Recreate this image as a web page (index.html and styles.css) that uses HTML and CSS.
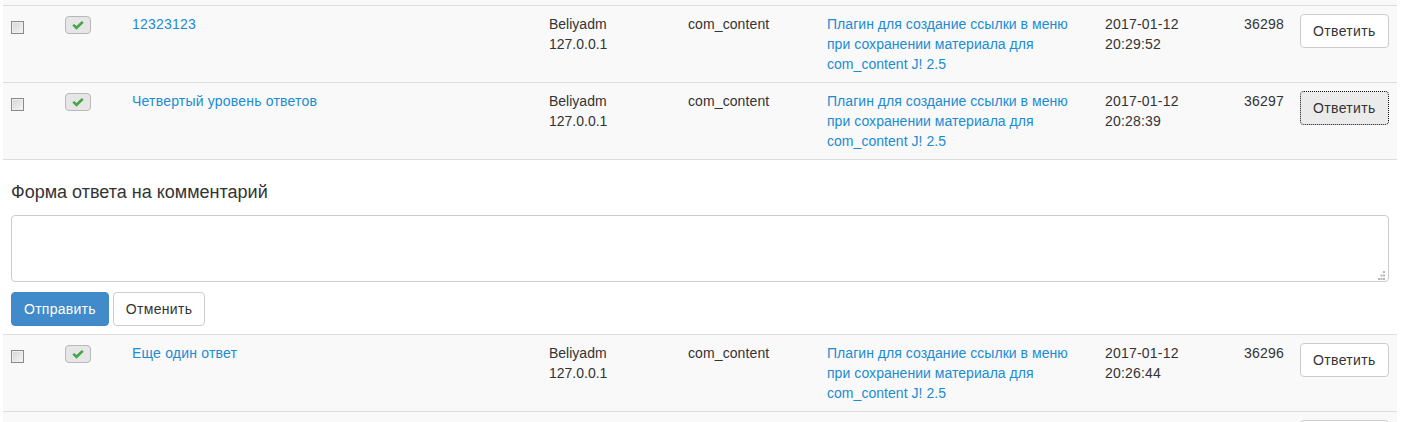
FILE: index.html
```html
<!DOCTYPE html>
<html lang="en">
<head>
    <meta charset="UTF-8">
    <meta name="viewport" content="width=device-width, initial-scale=1.0">
    <title>Комментарии</title>
    <link rel="stylesheet" href="styles.css">
</head>
<body>

<table class="comments">
    <colgroup>
        <col class="col-check">
        <col class="col-status">
        <col class="col-title">
        <col class="col-author">
        <col class="col-component">
        <col class="col-article">
        <col class="col-date">
        <col class="col-id">
        <col class="col-action">
    </colgroup>
    <tbody>
        <tr class="row-cut"><td colspan="9"></td></tr>

        <tr>
            <td><input type="checkbox" class="check"></td>
            <td><a class="status" href="#"><svg viewBox="0 0 12 9" class="status-icon"><path d="M0.3 4.6 L2.2 2.9 L4.5 5 L9.8 0 L11.7 1.8 L4.5 8.8 Z"/></svg></a></td>
            <td class="title"><a href="#">12323123</a></td>
            <td>Beliyadm<br>127.0.0.1</td>
            <td class="component">com_content</td>
            <td class="article"><a href="#">Плагин для создание ссылки в меню при сохранении материала для com_content J! 2.5</a></td>
            <td class="date">2017-01-12<br>20:29:52</td>
            <td class="date">36298</td>
            <td><button class="btn">Ответить</button></td>
        </tr>

        <tr>
            <td><input type="checkbox" class="check"></td>
            <td><a class="status" href="#"><svg viewBox="0 0 12 9" class="status-icon"><path d="M0.3 4.6 L2.2 2.9 L4.5 5 L9.8 0 L11.7 1.8 L4.5 8.8 Z"/></svg></a></td>
            <td class="title"><a href="#">Четвертый уровень ответов</a></td>
            <td>Beliyadm<br>127.0.0.1</td>
            <td class="component">com_content</td>
            <td class="article"><a href="#">Плагин для создание ссылки в меню при сохранении материала для com_content J! 2.5</a></td>
            <td class="date">2017-01-12<br>20:28:39</td>
            <td class="date">36297</td>
            <td><button class="btn btn-focus">Ответить</button></td>
        </tr>

        <tr class="row-form">
            <td colspan="9">
                <form class="reply">
                    <h4>Форма ответа на комментарий</h4>
                    <div class="reply-field">
                        <textarea class="reply-text"></textarea>
                        <svg class="grip" viewBox="0 0 8 9">
                            <path d="M6 0h2v2H6zM3.5 3.5h2v2h-2zM6 3.5h2v2H6zM1 7h2v2H1zM3.5 7h2v2h-2zM6 7h2v2H6z"/>
                        </svg>
                    </div>
                    <div class="reply-buttons">
                        <button type="button" class="btn btn-primary">Отправить</button>
                        <button type="button" class="btn">Отменить</button>
                    </div>
                </form>
            </td>
        </tr>

        <tr>
            <td><input type="checkbox" class="check"></td>
            <td><a class="status" href="#"><svg viewBox="0 0 12 9" class="status-icon"><path d="M0.3 4.6 L2.2 2.9 L4.5 5 L9.8 0 L11.7 1.8 L4.5 8.8 Z"/></svg></a></td>
            <td class="title"><a href="#">Еще один ответ</a></td>
            <td>Beliyadm<br>127.0.0.1</td>
            <td class="component">com_content</td>
            <td class="article"><a href="#">Плагин для создание ссылки в меню при сохранении материала для com_content J! 2.5</a></td>
            <td class="date">2017-01-12<br>20:26:44</td>
            <td class="date">36296</td>
            <td><button class="btn">Ответить</button></td>
        </tr>

        <tr class="row-last">
            <td colspan="8"></td>
            <td><button class="btn btn-cut" aria-label="Ответить"></button></td>
        </tr>
    </tbody>
</table>

</body>
</html>
```

FILE: styles.css
```css
html, body {
    height: 100%;
    overflow: hidden;
}

body {
    font-family: "Liberation Sans", Arial, sans-serif;
    font-size: 14px;
    line-height: 20px;
    color: #333;
    background-color: #fff;
    margin: 0;
    padding: 0 0 0 3px;
}

a {
    color: #1b8bd3;
    text-decoration: none;
}

.comments {
    width: 1394px;
    table-layout: fixed;
    border-collapse: separate;
    border-spacing: 0;
}

.col-check { width: 54px; }
.col-status { width: 67px; }
.col-title { width: 417px; }
.col-author { width: 139px; }
.col-component { width: 139px; }
.col-article { width: 278px; }
.col-date { width: 139px; }
.col-id { width: 56px; }
.col-action { width: 105px; }

.comments td {
    background-color: #f9f9f9;
    border-top: 1px solid #ddd;
    padding: 8px;
    vertical-align: top;
}

.comments .row-cut td {
    border-top: none;
    padding: 0;
    height: 5px;
}

.comments .row-form td {
    background-color: #fff;
}

.title { letter-spacing: 0.2px; }
.component { letter-spacing: 0.1px; }
.article { letter-spacing: 0.04px; }
.date { letter-spacing: 0.2px; }

.check {
    appearance: none;
    display: block;
    width: 13px;
    height: 13px;
    margin: 7px 0 0;
    border: 1px solid #8a8a8a;
    background: linear-gradient(135deg, #d4d4d8, #f6f6f6);
    box-shadow: inset 0 0 0 1px #eee;
}

.status {
    display: flex;
    align-items: center;
    justify-content: center;
    width: 26px;
    height: 18px;
    margin-top: 2px;
    box-sizing: border-box;
    border: 1px solid #b8b8b8;
    border-radius: 4px;
    background-color: #e6e6e6;
}

.status-icon {
    width: 12px;
    height: 9px;
    fill: #46a546;
}

.btn {
    font-family: inherit;
    font-size: 14px;
    line-height: 20px;
    letter-spacing: 0.35px;
    color: #333;
    background-color: #fff;
    border: 1px solid #ccc;
    border-radius: 4px;
    padding: 6px 12px;
    cursor: pointer;
}

.btn-focus {
    background-color: #ebebeb;
    border: 1px dotted #111;
}

.btn-cut {
    display: block;
    width: 89px;
    height: 34px;
}

.btn-primary {
    color: #fff;
    background-color: #428bca;
    border-color: #3f87c6;
    letter-spacing: 0.25px;
}

.reply h4 {
    font-size: 18px;
    font-weight: normal;
    line-height: 20px;
    color: #333;
    margin: 14px 0 13px;
}

.reply-field {
    position: relative;
}

.reply-text {
    display: block;
    width: 100%;
    height: 67px;
    box-sizing: border-box;
    margin: 0;
    border: 1px solid #ccc;
    border-radius: 4px;
    background-color: #fff;
    resize: none;
}

.grip {
    position: absolute;
    right: 4px;
    bottom: 2px;
    width: 8px;
    height: 9px;
    fill: #b5b5b5;
}

.reply-buttons {
    display: flex;
    gap: 4px;
    margin-top: 10px;
}
```
